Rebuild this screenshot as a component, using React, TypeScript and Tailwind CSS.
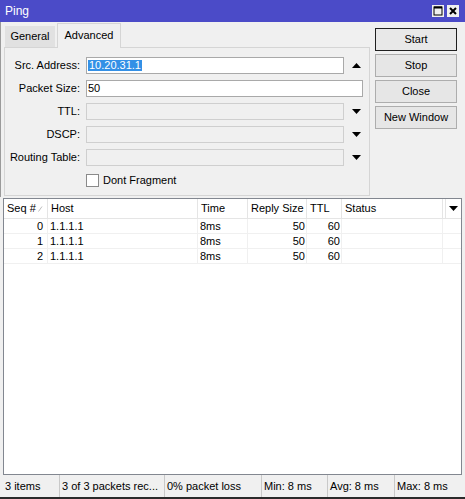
import React from 'react';

const font = { fontFamily: '"Liberation Sans", Arial, sans-serif' };

const Up = () => (
  <svg width="9" height="5" viewBox="0 0 9 5">
    <polygon points="0,5 9,5 4.5,0" fill="#000" />
  </svg>
);

const Down = () => (
  <svg width="9" height="5" viewBox="0 0 9 5">
    <polygon points="0,0 9,0 4.5,5" fill="#000" />
  </svg>
);

type FieldProps = {
  label: string;
  value?: React.ReactNode;
  disabled?: boolean;
  arrow?: 'up' | 'down';
};

const Field = ({ label, value, disabled, arrow }: FieldProps) => {
  return (
    <div className="flex items-center h-[17px] mb-[6px]">
      <div className="w-[76px] text-right pr-[1px]">{label}</div>
      <div
        className={`${
          disabled ? 'bg-[#f0f0f0] border-[#cfcfcf]' : 'bg-white border-[#a9a9a9]'
        } ml-[5px] h-[17px] border flex items-center pl-[1px] ${arrow ? 'w-[258px]' : 'w-[277px]'}`}>
        {value}
      </div>
      {arrow && (
        <div className="w-[25px] flex justify-center">{arrow === 'up' ? <Up /> : <Down />}</div>
      )}
    </div>
  );
};

const Btn = ({ children, primary }: { children: React.ReactNode; primary?: boolean }) => (
  <div
    className={`${
      primary ? 'border-[#1f1f1f] bg-[#e8e8e8]' : 'border-[#adadad] bg-[#e6e6e6]'
    } h-[23px] border flex items-center justify-center`}>
    {children}
  </div>
);

const cols = [
  { title: 'Seq #', w: 'w-[44px]' },
  { title: 'Host', w: 'w-[150px]' },
  { title: 'Time', w: 'w-[50px]' },
  { title: 'Reply Size', w: 'w-[59px]' },
  { title: 'TTL', w: 'w-[35px]' },
  { title: 'Status', w: 'w-[101px]' }
];

const rows = [
  { seq: 0, host: '1.1.1.1', time: '8ms', size: 50, ttl: 60 },
  { seq: 1, host: '1.1.1.1', time: '8ms', size: 50, ttl: 60 },
  { seq: 2, host: '1.1.1.1', time: '8ms', size: 50, ttl: 60 }
];

const statusItems = [
  { text: '3 items', w: 'w-[57px]' },
  { text: '3 of 3 packets rec...', w: 'w-[105px]' },
  { text: '0% packet loss', w: 'w-[97px]' },
  { text: 'Min: 8 ms', w: 'w-[66px]' },
  { text: 'Avg: 8 ms', w: 'w-[67px]' },
  { text: 'Max: 8 ms', w: 'w-[67px]' }
];

export default function App() {
  return (
    <div
      style={font}
      className="w-[465px] h-[499px] bg-[#f0f0f0] flex flex-col text-[11px] text-black overflow-hidden">
      {/* title bar */}
      <div className="h-[22px] bg-[#4b4bc8] flex items-center justify-between pl-[5px] pr-[6px]">
        <span className="text-white text-[12px]">Ping</span>
        <div className="flex gap-[3px]">
          <div className="w-[12px] h-[12px] bg-[#f0f0f0] flex items-center justify-center">
            <svg width="10" height="10" viewBox="0 0 10 10">
              <rect x="1" y="1" width="8" height="8" fill="none" stroke="#000" strokeWidth="1" />
              <line x1="1" y1="1.5" x2="9" y2="1.5" stroke="#000" strokeWidth="2" />
            </svg>
          </div>
          <div className="w-[12px] h-[12px] bg-[#f0f0f0] flex items-center justify-center">
            <svg width="10" height="10" viewBox="0 0 10 10">
              <path d="M2 2 L8 8 M8 2 L2 8" stroke="#000" strokeWidth="2" />
            </svg>
          </div>
        </div>
      </div>

      {/* top section */}
      <div className="h-[175px] flex border-l border-[#9a9a9a]">
        <div className="ml-[3px] w-[366px] flex flex-col">
          <div className="h-[26px] flex items-end">
            <div className="w-[1px] h-[1px] bg-[#d5d5d5]" />
            <div className="w-[50px] h-[22px] bg-[#e1e1e1] border-b border-[#d5d5d5] flex items-center justify-center">
              General
            </div>
            <div className="w-[2px] h-[1px] bg-[#d5d5d5]" />
            <div className="w-[64px] h-[25px] border-l border-t border-r border-[#d5d5d5] flex items-center justify-center pb-[2px]">
              Advanced
            </div>
            <div className="flex-1 h-[1px] bg-[#d5d5d5]" />
          </div>
          <div className="flex-1 border-l border-r border-b border-[#d5d5d5] pt-[9px] mb-[1px]">
            <Field
              label="Src. Address:"
              arrow="up"
              value={<span className="bg-[#3390e6] text-white px-[1px] leading-[11px]">10.20.31.1</span>}
            />
            <Field label="Packet Size:" value="50" />
            <Field label="TTL:" disabled arrow="down" />
            <Field label="DSCP:" disabled arrow="down" />
            <Field label="Routing Table:" disabled arrow="down" />
            <div className="flex items-center h-[17px] mt-[3px] ml-[81px]">
              <div className="w-[13px] h-[13px] border border-[#8a8a8a] bg-white" />
              <span className="ml-[4px]">Dont Fragment</span>
            </div>
          </div>
        </div>
        <div className="ml-[5px] w-[82px] pt-[6px] flex flex-col gap-[3px]">
          <Btn primary>Start</Btn>
          <Btn>Stop</Btn>
          <Btn>Close</Btn>
          <Btn>New Window</Btn>
        </div>
      </div>

      {/* table */}
      <div className="mt-[1px] ml-[3px] w-[459px] h-[277px] border border-[#828790] bg-white flex flex-col">
        <div className="h-[20px] flex border-b border-[#e5e5e5]">
          {cols.map((c, i) => (
            <div
              key={c.title}
              className={`${c.w} h-full border-r border-[#e5e5e5] flex items-center pl-[3px] ${
                i === 0 ? 'justify-between pr-[4px]' : ''
              }`}>
              <span>{c.title}</span>
              {i === 0 && (
                <svg width="5" height="6" viewBox="0 0 5 6">
                  <path d="M0.5 5.5 L4 0.5" stroke="#bdbdbd" strokeWidth="1" />
                </svg>
              )}
            </div>
          ))}
          <div className="w-[3px] h-full border-r border-[#e5e5e5]" />
          <div className="flex-1 flex items-center justify-center">
            <Down />
          </div>
        </div>
        {rows.map((r) => (
          <div key={r.seq} className="h-[15px] flex border-b border-[#f0f0f0]">
            <div className="w-[44px] border-r border-[#f0f0f0] text-right pr-[4px] leading-[14px]">{r.seq}</div>
            <div className="w-[150px] border-r border-[#f0f0f0] pl-[2px] leading-[14px]">{r.host}</div>
            <div className="w-[50px] border-r border-[#f0f0f0] pl-[2px] leading-[14px]">{r.time}</div>
            <div className="w-[59px] border-r border-[#f0f0f0] text-right pr-[1px] leading-[14px]">{r.size}</div>
            <div className="w-[35px] border-r border-[#f0f0f0] text-right pr-[1px] leading-[14px]">{r.ttl}</div>
            <div className="w-[101px] border-r border-[#f0f0f0]" />
          </div>
        ))}
      </div>

      {/* status bar */}
      <div className="h-[22px] ml-[3px] w-[459px] flex">
        {statusItems.map((s, i) => (
          <div
            key={s.text}
            className={`${s.w} h-full flex items-center pl-[2px] whitespace-nowrap ${
              i < statusItems.length - 1 ? 'border-r border-[#c9c9c9]' : ''
            }`}>
            {s.text}
          </div>
        ))}
      </div>
      <div className="h-[2px] bg-[#2a2a2a]" />
    </div>
  );
}
